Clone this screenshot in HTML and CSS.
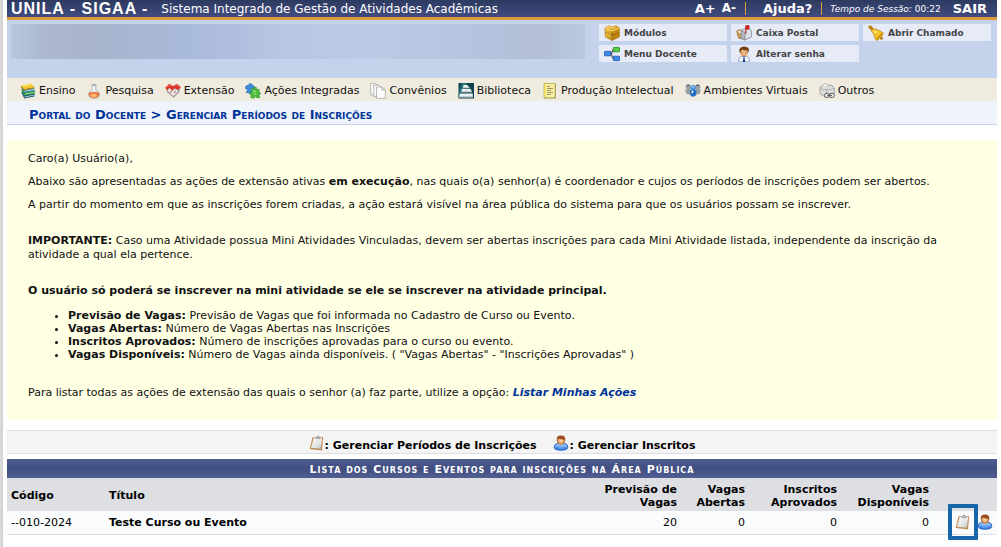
FILE: index.html
```html
<!DOCTYPE html>
<html lang="pt-BR">
<head>
<meta charset="utf-8">
<title>SIGAA - Gerenciar Períodos de Inscrições</title>
<link rel="stylesheet" href="styles.css">
</head>
<body>
<svg class="sprite" aria-hidden="true">
  <defs>
    <linearGradient id="gold" x1="0" y1="0" x2="1" y2="1"><stop offset="0" stop-color="#f3ca48"/><stop offset="1" stop-color="#b87808"/></linearGradient>
    <linearGradient id="paper" x1="0" y1="0" x2="1" y2="1"><stop offset="0" stop-color="#ffffff"/><stop offset="1" stop-color="#cfd2d2"/></linearGradient>
    <linearGradient id="blue" x1="0" y1="0" x2="0" y2="1"><stop offset="0" stop-color="#a4d2ff"/><stop offset="1" stop-color="#3a80e6"/></linearGradient>
    <radialGradient id="skin"><stop offset="0" stop-color="#ffdcb0"/><stop offset="1" stop-color="#dc9450"/></radialGradient>
  </defs>
  <symbol id="clip" viewBox="0 0 16 16">
    <path d="M3.6 2.2L14.2 2.2L13 15.5L.6 14z" fill="#c08c58"/>
    <path d="M4.8 2.8L13.2 3L11.8 13.8L2 12.8z" fill="url(#paper)"/>
    <path d="M13 10.8L11.6 13.6L9.8 13.3z" fill="#a9a9a6"/>
    <path d="M6.2 3.8L6.8 2L8 2Q8.2.5 9.4.7Q10.4.9 10.2 2.2L11.4 2.4L11 4z" fill="#8d9494"/>
    <path d="M7 2.8H10.6" stroke="#d9dddd" stroke-width=".7"/>
  </symbol>
  <symbol id="user" viewBox="0 0 16 16">
    <path d="M1.2 12.5Q1 9 4.5 8.4L11.5 8.4Q15 9 14.8 12.5Q14.4 15.2 8 15.2Q1.6 15.2 1.2 12.5z" fill="url(#blue)" stroke="#1858b8" stroke-width=".9"/>
    <path d="M4 12v2.4M12 12v2.4" stroke="#1858b8" stroke-width=".7"/>
    <path d="M5.5 8.6Q8 12 10.5 8.6z" fill="#fff"/>
    <ellipse cx="8" cy="5.4" rx="3.7" ry="4" fill="url(#skin)" stroke="#8a4818" stroke-width=".6"/>
    <path d="M3.8 6Q3 .6 8 .6T12.2 6Q11.8 4.2 10 4.4Q7 4.6 5.4 3.6Q4.4 4 3.8 6z" fill="#9a4c1c"/>
  </symbol>
  <symbol id="books" viewBox="0 0 16 16">
    <path d="M1.2 8.8L4.2 15.6L14.4 13.6V10z" fill="#1c5a78"/><path d="M4.6 13.6L13.8 11.8V12.6L4.8 14.4z" fill="#b9d0d8"/>
    <path d="M1 6L4.2 12.6L14.8 10.6V7.6z" fill="#2f9a34"/><path d="M4.6 10.8L14 9V9.8L4.8 11.6z" fill="#d4e8b4"/>
    <path d="M1.2 4L4.2 9.8L14.4 7.7L14.2 5z" fill="#1f7cba"/><path d="M4.6 8L14 6.1V6.9L4.8 8.8z" fill="#d8e8f0"/>
    <path d="M.8 2.8L10.8.4L14.4 4.1L4.4 6.6z" fill="#f2c829"/><path d="M.8 2.8L4.4 6.6L14.4 4.1V5.2L4.2 7.8L.8 4.2z" fill="#b88c14"/>
    <path d="M3 3.2L10.5 1.4" stroke="#fff09a" stroke-width=".9"/>
  </symbol>
  <symbol id="flask" viewBox="0 0 16 16">
    <path d="M6.4 2V6.2L3 9.6Q1.4 15.3 8 15.3T13 9.6L9.8 6.2V2z" fill="#e6e9ec" stroke="#a3a8b2" stroke-width=".8"/>
    <path d="M3 9.6Q8 8.2 13 9.6Q14.2 15 8 15T3 9.6z" fill="#ea6a34"/><ellipse cx="7.6" cy="12.4" rx="3.4" ry="1.9" fill="#ffb268"/>
    <path d="M5.6 1.2Q8.2.1 10.6 1.2V2.8H5.6z" fill="#a7b0bb"/><path d="M7.5 3v4" stroke="#fff" stroke-width="1.2"/>
  </symbol>
  <symbol id="heart" viewBox="0 0 16 16">
    <path d="M.8 4.6L5 1.6L8 3.4L11 1.3L15.4 4L14.4 9L8.8 14.8L2.2 9.5z" fill="#a89c9a"/>
    <path d="M3 6L5.5 5L7.4 8L9.2 6.2L13 7L12 9.4L8.6 13L3.6 9z" fill="#efe6e3"/>
    <path d="M.3 4.8L4.2.8L8.2 3.2L11.8.8L15.8 3.8L13.4 7L9.4 4.8L7.2 8L4.6 4.8L2 7.2z" fill="#df3226"/>
    <path d="M2.4 3.6L4.5 1.8L6.6 3.2M10 3L12 1.8L14 3.6" stroke="#ff8a7c" stroke-width=".8" fill="none"/>
    <path d="M5 9h1.6M9 9h1.8" stroke="#8f4a46"/>
  </symbol>
  <symbol id="puzzle" viewBox="0 0 16 16">
    <path d="M1 3L4 2Q4 0 5.6.5T7 2L9.2 3L8.5 8L6 10L1.2 9.5L2.8 6.5L.4 5.5z" fill="#3a8cd8" stroke="#1a6ab4" stroke-width=".6"/>
    <path d="M6 5.5L9 6.2Q8.6 3.6 10.5 4T11.5 6.6L14.3 6.3L13.8 9.2Q16 9 15.5 10.7T13.4 11.4L15 14.4L11.5 14.7L10.8 12.6L9.2 15.2L5.6 14.5L6.4 12L4 10.8L6.8 9z" fill="#4dbb3d" stroke="#2f982c" stroke-width=".6"/>
    <path d="M7.6 8l3.4.6M8.6 10.6l2.6.8" stroke="#a9eb85"/>
  </symbol>
  <symbol id="pages" viewBox="0 0 16 16">
    <g fill="#fbfbfa" stroke="#a7a7a4" stroke-width=".8"><path d="M.7.7H6L8.2 3V12H.7z"/><path d="M3.8 2.2H9L11.4 4.6V13.6H3.8z"/><path d="M6.5 4H12L15.3 7V15.3H6.5z"/><path d="M12 4V7H15.3" fill="#ddd"/></g>
  </symbol>
  <symbol id="library" viewBox="0 0 16 16">
    <path d="M.5 0H16V15.5H.5z" fill="#0e454c"/><path d="M.5 10L4 0H9L.5 15z" fill="#24747a"/>
    <path d="M5.5 2H9.5L11.5 5H5zM3.8 6H12.8L14 9H3.5zM1.8 10.4H14.8V14.2H1z" fill="#e8eff0"/><path d="M5 5h7M3.5 9H14M1 14H15" stroke="#9dabae"/>
  </symbol>
  <symbol id="note" viewBox="0 0 16 16">
    <path d="M2 .5H14V15.5H2z" fill="#a5a583"/><path d="M2 .5H13V14.6H2z" fill="#faf1a5" stroke="#b4a84d" stroke-width=".7"/><path d="M2.8 1v13" stroke="#ead452" stroke-width="1.5"/>
    <path d="M5 3.5H8M5 5.5H11M5 7.5H9M5 9.5H11M5 11.5H9" stroke="#8b8a5a" stroke-width=".9"/>
  </symbol>
  <symbol id="people" viewBox="0 0 16 16">
    <g fill="#9aa1a5"><circle cx="3.3" cy="4" r="2.6"/><circle cx="12.7" cy="4" r="2.6"/><path d="M.2 6.6L5.4 5.5V12L1 10.4zM15.8 6.6L10.6 5.5V12L15 10.4z"/></g>
    <path d="M1.2 3Q3 1 5 2.6M11 2.6Q13 1 14.8 3" stroke="#4b555d" fill="none"/>
    <circle cx="8.2" cy="4.8" r="2.8" fill="#4a8fcf"/><path d="M4.6 7.5Q8 5.8 11.6 7.5L10.8 12.6Q8 15 5.6 12.4z" fill="#1f6cc6"/><path d="M6.3 7.4L9 8L7 11z" fill="#e9f4fd"/><path d="M6.5 4h3" stroke="#c5e2f7"/>
  </symbol>
  <symbol id="others" viewBox="0 0 16 16">
    <path d="M1 4L4 2.5V1.5Q6-.2 8 1.4V2.5L11 2Q13.5 1.4 14 4L15.3 5V11L8 14.5L1 11z" fill="#dcdddb" stroke="#979997" stroke-width=".8"/>
    <path d="M1 5Q4 8 7.5 6.5Q11 8 15 5M7.5 7v6" fill="none" stroke="#a7aaa9" stroke-width=".8"/><ellipse cx="6" cy="2.2" rx="2" ry="1" fill="#fff"/>
    <rect x="5.5" y="10.4" width="5" height="4" rx="1.8" fill="#eee" stroke="#555"/><rect x="10.3" y="10.4" width="5" height="4" rx="1.8" fill="#eee" stroke="#555"/><path d="M8 12.4h5" stroke="#555"/>
  </symbol>
  <symbol id="box" viewBox="0 0 16 16">
    <path d="M.8 3L5 .8L8 2L12 .6L15.4 3V12L8 15.6L1.4 12z" fill="url(#gold)" stroke="#b67c14" stroke-width=".6"/>
    <path d="M8 6L15.2 3.2V12L8 15.4z" fill="#b87a0c" opacity=".45"/>
    <path d="M8 6V15.4M1.2 7.4L8 10.6L15.2 7.4" fill="none" stroke="#8f5f08" stroke-width=".8"/>
    <path d="M1.4 3.2L8 6L15 3.2M3 2.7L5 1.8L8 3L11.5 1.8M2 8.6L7.4 11.2" stroke="#ffe07a" stroke-width=".8" fill="none"/>
  </symbol>
  <symbol id="mail" viewBox="0 0 16 16">
    <path d="M.7 6L4 4.5L7 8V14L2.5 13z" fill="#d5a35c" stroke="#926228" stroke-width=".7"/>
    <path d="M5 7Q5 4 8 4L13 3.5Q15.5 4 15.5 7V12L9 15L5 13z" fill="#dcdfe5" stroke="#888d98" stroke-width=".8"/>
    <path d="M5 7Q7 4.4 9 8V15L5 13z" fill="#b2b7bf" stroke="#7a808b" stroke-width=".7"/><path d="M9.8 9V.8H13V4H10" fill="#e32822" stroke="#ba1815" stroke-width="1"/>
    <path d="M1.5 6.5L4 5.7L5.5 8.5" fill="#fff"/>
  </symbol>
  <symbol id="bell" viewBox="0 0 16 16">
    <path d="M.8 1Q2.8-.4 4.2 1.8L5.6 4.1L3.8 5.6L1.3 3.8Q-.2 2.3.8 1z" fill="#b7840c"/>
    <path d="M3.2 6Q4.8 2.8 7.8 4L14.2 7Q16.2 8.4 14.8 10L9.8 15Q8.2 16.2 7.2 14L5.4 8.6z" fill="#f3c42c" stroke="#b98410" stroke-width=".7"/>
    <path d="M5.4 5.8L9.4 6.4L7.6 8.6z" fill="#fff0a0"/><path d="M14.2 8.6L8.6 14.2" stroke="#c98b08" stroke-width="1.4"/><circle cx="13.4" cy="13.2" r="1.5" fill="#b87c10"/>
  </symbol>
  <symbol id="tree" viewBox="0 0 16 16">
    <path d="M6 7.5H7.5Q8.5 3.5 10 3.5M7.5 7.5Q8 12.5 10 12.5" fill="none" stroke="#555" stroke-width="1.2"/><g stroke-width=".8"><rect x=".5" y="5.4" width="6.2" height="4.4" rx=".6" fill="#3c8cf0" stroke="#1b4ca6"/><rect x="9.3" y="1.4" width="6.2" height="4.4" rx=".6" fill="#56cf41" stroke="#24841f"/><rect x="9.3" y="10.2" width="6.2" height="4.4" rx=".6" fill="#3c8cf0" stroke="#1b4ca6"/></g>
  </symbol>
  <symbol id="boy" viewBox="0 0 16 16">
    <path d="M2.5 16Q2.4 10.8 6 10.3H10Q13.6 10.8 13.5 16z" fill="#f5f7fd" stroke="#8290ba" stroke-width=".8"/><path d="M7 10.5H9L8.6 12L9.5 16H6.5L7.4 12z" fill="#304b9c"/>
    <circle cx="8" cy="6" r="4.2" fill="url(#skin)"/><path d="M3.3 6.5Q2.5.4 8.3.5T12.8 6.5L11.5 4.3Q8 4.8 6.3 3.4Q4.8 5 3.3 6.5z" fill="#714013"/>
    <path d="M4.5 6.3H7.3M8.8 6.3H11.6" stroke="#8a6a50" stroke-width=".7"/>
  </symbol>
</svg>

<div class="page">
  <header class="topbar">
    <h1 class="brand">UNILA - SIGAA -</h1>
    <span class="system">Sistema Integrado de Gestão de Atividades Acadêmicas</span>
    <div class="tools">
      <button class="plain large" type="button">A+</button>
      <button class="plain small" type="button">A-</button>
      <a class="help" href="#ajuda">Ajuda?</a>
      <span class="session"><em>Tempo de Sessão:</em> 00:22</span>
      <a class="exit" href="#sair">SAIR</a>
    </div>
  </header>

  <section class="panel">
    <div class="identity"></div>
    <nav class="shortcuts">
      <a href="#modulos"><svg><use href="#box"/></svg>Módulos</a>
      <a href="#caixa"><svg><use href="#mail"/></svg>Caixa Postal</a>
      <a href="#chamado"><svg><use href="#bell"/></svg>Abrir Chamado</a>
      <a href="#menu"><svg><use href="#tree"/></svg>Menu Docente</a>
      <a href="#senha"><svg><use href="#boy"/></svg>Alterar senha</a>
    </nav>
  </section>

  <nav class="menu">
    <a href="#ensino"><svg><use href="#books"/></svg>Ensino</a>
    <a href="#pesquisa"><svg><use href="#flask"/></svg>Pesquisa</a>
    <a href="#extensao"><svg><use href="#heart"/></svg>Extensão</a>
    <a href="#acoes"><svg><use href="#puzzle"/></svg>Ações Integradas</a>
    <a href="#convenios"><svg><use href="#pages"/></svg>Convênios</a>
    <a href="#biblioteca"><svg><use href="#library"/></svg>Biblioteca</a>
    <a href="#producao"><svg><use href="#note"/></svg>Produção Intelectual</a>
    <a href="#ambientes"><svg><use href="#people"/></svg>Ambientes Virtuais</a>
    <a href="#outros"><svg><use href="#others"/></svg>Outros</a>
  </nav>

  <h2 class="crumb"><a href="#portal">Portal do Docente</a> &gt; Gerenciar Períodos de Inscrições</h2>

  <main>
    <section class="notice">
      <p>Caro(a) Usuário(a),</p>
      <p>Abaixo são apresentadas as ações de extensão ativas <b>em execução</b>, nas quais o(a) senhor(a) é coordenador e cujos os períodos de inscrições podem ser abertos.</p>
      <p>A partir do momento em que as inscrições forem criadas, a ação estará visível na área pública do sistema para que os usuários possam se inscrever.</p>
      <p class="spaced"><b>IMPORTANTE:</b> Caso uma Atividade possua Mini Atividades Vinculadas, devem ser abertas inscrições para cada Mini Atividade listada, independente da inscrição da atividade a qual ela pertence.</p>
      <p class="spaced"><b>O usuário só poderá se inscrever na mini atividade se ele se inscrever na atividade principal.</b></p>
      <ul>
        <li><b>Previsão de Vagas:</b> Previsão de Vagas que foi informada no Cadastro de Curso ou Evento.</li>
        <li><b>Vagas Abertas:</b> Número de Vagas Abertas nas Inscrições</li>
        <li><b>Inscritos Aprovados:</b> Número de inscrições aprovadas para o curso ou evento.</li>
        <li><b>Vagas Disponíveis:</b> Número de Vagas ainda disponíveis. ( "Vagas Abertas" - "Inscrições Aprovadas" )</li>
      </ul>
      <p>Para listar todas as ações de extensão das quais o senhor (a) faz parte, utilize a opção: <a class="own" href="#acoes-minhas">Listar Minhas Ações</a></p>
    </section>

    <div class="legend">
      <span><svg><use href="#clip"/></svg>: Gerenciar Períodos de Inscrições</span>
      <span><svg><use href="#user"/></svg>: Gerenciar Inscritos</span>
    </div>

    <table class="list">
      <caption>Lista dos Cursos e Eventos para inscrições na Área Pública</caption>
      <thead>
        <tr><th class="code">Código</th><th>Título</th><th class="num forecast">Previsão de Vagas</th><th class="num open">Vagas Abertas</th><th class="num approved">Inscritos Aprovados</th><th class="num free">Vagas Disponíveis</th><th class="actions"></th></tr>
      </thead>
      <tbody>
        <tr><td>--010-2024</td><td><b>Teste Curso ou Evento</b></td><td class="num">20</td><td class="num">0</td><td class="num">0</td><td class="num">0</td>
          <td class="actions"><div class="icons"><button class="plain marked" type="button" aria-label="Gerenciar Períodos de Inscrições"><svg><use href="#clip"/></svg></button><button class="plain" type="button" aria-label="Gerenciar Inscritos"><svg><use href="#user"/></svg></button></div></td></tr>
      </tbody>
    </table>
  </main>
</div>
</body>
</html>
```

FILE: styles.css
```css
* { box-sizing: border-box; }
body {
  margin: 0;
  min-height: 100vh;
  padding: 0 4px 0 7px;
  background: linear-gradient(90deg, #dcdcdc 0, #d0d0d0 3px, #fff 3px);
  background-color: #fff;
  color: #111;
  font: 11px/14px "DejaVu Sans", Verdana, sans-serif;
}
a { color: inherit; text-decoration: none; }
svg { width: 16px; height: 16px; flex: none; }
.sprite { position: absolute; width: 0; height: 0; }
.plain { border: 0; padding: 0; background: none; color: inherit; font: inherit; cursor: pointer; }

.topbar {
  display: flex;
  align-items: center;
  height: 20px;
  padding: 0 10px 0 4px;
  border-bottom: 3px solid #dd9a3c;
  background: linear-gradient(#2d3a60, #404c80);
  color: #fff;
}
.brand { margin: 0 13px 0 0; font: bold 16px/17px "Liberation Sans", Arial, sans-serif; letter-spacing: 1px; }
.system { font-size: 12px; line-height: 17px; padding-top: 2px; }
.tools { display: flex; align-items: center; margin-left: auto; font-size: 13px; line-height: 13px; font-weight: bold; }
.small { font-size: 12px; font-weight: bold; margin: 0 9px 0 6px; }
.large { font-size: 13px; font-weight: bold; }
.help { border-left: 1px solid #dd9a3c; padding: 0 9px 0 17px; }
.session { border-left: 1px solid #dd9a3c; padding: 2px 12px 0 8px; font-size: 9px; line-height: 11px; font-weight: normal; }

.panel { display: flex; justify-content: space-between; gap: 14px; height: 58px; padding: 4px 6px 0 4px; background: #c4d2eb; }
.identity {
  flex: 0 1 574px;
  height: 35px;
  background: linear-gradient(90deg, #b8c6e0, #abb8d0 6%, #a8b4cd 14%, #a9b9d8 30%, #afbfdd 40%, #b8c8e4 48%, #bbc9e5 65%, #b7c4df 78%, #b3bfd9 92%, #bac7e1);
}
.shortcuts { display: grid; grid-template-columns: repeat(3, 128px); grid-auto-rows: 17px; gap: 4px; }
.shortcuts a { display: flex; align-items: center; gap: 4px; padding: 1px 5px 0; background: #e6ebf7; color: #444; font-size: 9px; font-weight: bold; }

.menu { display: flex; align-items: center; gap: 11px; height: 23px; padding: 0 13px; background: #efebde; }
.menu a { display: flex; align-items: center; gap: 3px; padding-top: 2px; line-height: 21px; white-space: nowrap; }

.crumb { margin: 0 0 15px; padding: 6px 22px 1px; border-bottom: 1px solid #c4d2eb; background: #eff3fa; color: #039; font-size: 13px; line-height: 16px; font-variant: small-caps; }

.notice { padding: 12px 21px 20px; background: #ffffe4; }
.notice p { margin: 0 0 9px; }
.notice .spaced { margin: 22px 0; }
.notice ul { margin: -11px 0 25px; padding-left: 40px; line-height: 13px; }
.notice p:last-child { margin: 0; }
.own { color: #039; font-weight: bold; font-style: italic; }

.legend { display: flex; justify-content: center; gap: 17px; margin: 10px 0 5px; height: 24px; border: solid #dedfe3; border-width: 1px 0; background: #f4f4f4; color: #000; font-weight: bold; line-height: 28px; }
.legend span { display: flex; align-items: flex-start; padding-top: 1px; }
.legend svg { margin-top: 3px; }

.list { width: 100%; border-collapse: collapse; color: #000; }
.list caption { height: 19px; background: linear-gradient(#505e92, #414e80 50%, #505e92); color: #fff; font-weight: bold; font-variant: small-caps; letter-spacing: 1px; line-height: 19px; padding-top: 1px; }
.list th { height: 33px; padding: 4px 4px 2px; background: #dedfe3; line-height: 13px; text-align: left; }
.list td { height: 23px; padding: 2px 4px 0; background: #f9fbfd; border-bottom: 1px solid #dedfe3; }
.list .num { text-align: right; }
.code { width: 98px; }
.forecast { width: 84px; }
.open { width: 68px; }
.approved { width: 92px; }
.free { width: 92px; }
.list .actions { width: 64px; padding: 0; }
.icons { display: flex; justify-content: flex-end; align-items: center; gap: 6px; height: 21px; padding-right: 4px; }
.icons .plain { display: flex; }
.marked { position: relative; }
.marked::after { content: ""; position: absolute; inset: -10px -7px; border: 4px solid #1765ab; border-radius: 1px; }
```
